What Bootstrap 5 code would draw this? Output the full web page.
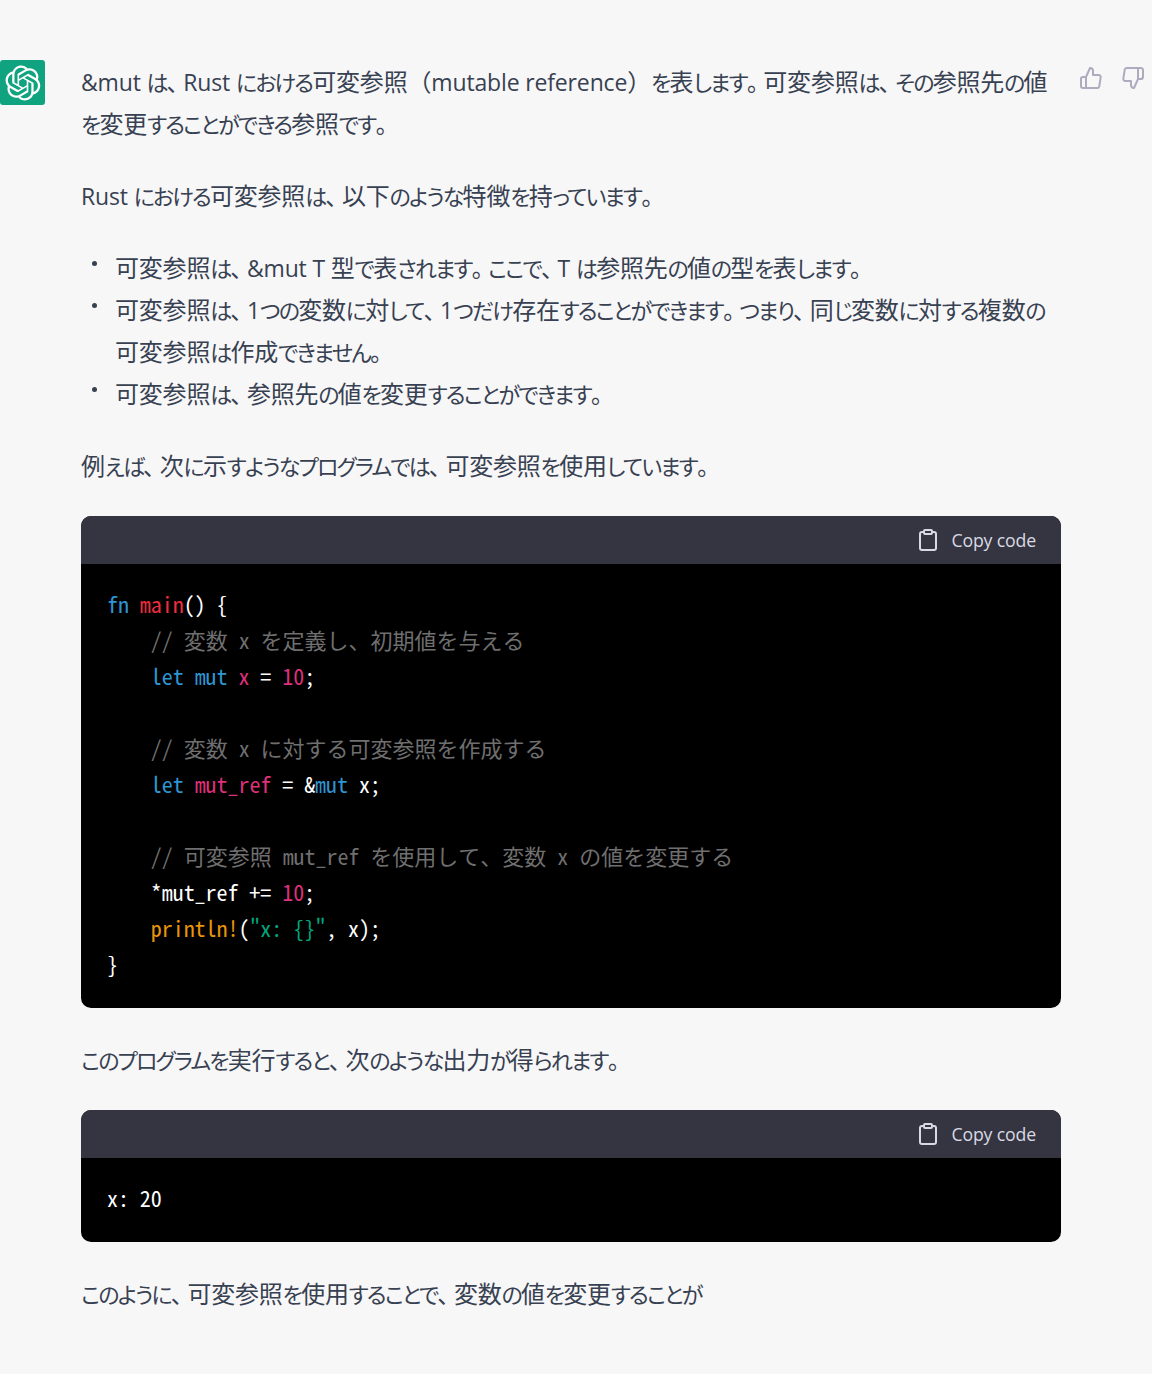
<!DOCTYPE html>
<html lang="ja">
<head>
<meta charset="utf-8">
<title>Rust 可変参照</title>
<link href="https://cdn.jsdelivr.net/npm/bootstrap@5.3.0/dist/css/bootstrap.min.css" rel="stylesheet">
<style>
html,body{background:#f7f7f8;}
body{height:1374px;overflow:hidden;color:#374151;font-family:"Open Sans","Noto Sans CJK JP",sans-serif;}
.chat-row{padding-top:60px;}
.avatar{width:45px;height:45px;background:#10a37f;border-radius:3px;flex:none;margin-right:36px;}
.msg{width:980px;flex:none;font-size:23px;line-height:42px;font-feature-settings:"palt";letter-spacing:-.15px;padding-top:1px;}
.msg p{margin:0 0 30px;}
.msg ul{list-style:none;margin:0 0 30px;padding:0 0 0 34px;}
.msg li{position:relative;}
.msg li::before{content:"";position:absolute;left:-23px;top:14px;width:5px;height:5px;border-radius:50%;background:#374151;}
.kj{font-size:24px;letter-spacing:-.2px;line-height:0;}
.kn{font-size:22px;letter-spacing:-1.8px;line-height:0;}
.pn{font-size:23px;letter-spacing:5px;line-height:0;}
.fw{font-size:24px;font-feature-settings:normal;line-height:0;}
.actions{margin-left:18px;gap:18px;padding-top:6px;color:#acacbe;}
.codebox{border-radius:10px;overflow:hidden;background:#000;margin:-1px 0 31px;}
.codehead{height:48px;background:#343541;color:#d9d9e3;font-size:17.7px;padding-right:25px;gap:11px;}
.codebody{margin:0;padding:21px 26px 27px;font-family:"Noto Sans Mono CJK JP","Liberation Mono",monospace;font-size:22px;font-weight:300;line-height:36px;letter-spacing:-.05px;color:#fff;}
.cjr{letter-spacing:0;}
.t-kw{color:#2e95d3}.t-fn{color:#f22c3d}.t-var{color:#df3079}.t-cm{color:#6f6f6f}.t-str{color:#00a67d}.t-mac{color:#e9950c}
</style>
</head>
<body>
<div class="d-flex align-items-start chat-row">
  <div class="avatar d-flex align-items-center justify-content-center">
    <svg width="36" height="36" viewBox="0 0 41 41" fill="#fff" aria-hidden="true"><path d="M37.5324 16.8707C37.9808 15.5241 38.1363 14.0974 37.9886 12.6859C37.8409 11.2744 37.3934 9.91076 36.676 8.68622C35.6126 6.83404 33.9882 5.3676 32.0373 4.4985C30.0864 3.62941 27.9098 3.40259 25.8215 3.85078C24.8796 2.7893 23.7219 1.94125 22.4257 1.36341C21.1295 0.785575 19.7249 0.491269 18.3058 0.500197C16.1708 0.495044 14.0893 1.16803 12.3614 2.42214C10.6335 3.67624 9.34853 5.44666 8.6917 7.47815C7.30085 7.76286 5.98686 8.3414 4.8377 9.17505C3.68854 10.0087 2.73073 11.0782 2.02839 12.312C0.956464 14.1591 0.498905 16.2988 0.721698 18.4228C0.944492 20.5467 1.83612 22.5449 3.268 24.1293C2.81966 25.4759 2.66413 26.9026 2.81182 28.3141C2.95951 29.7256 3.40701 31.0892 4.12437 32.3138C5.18791 34.1659 6.8123 35.6322 8.76321 36.5013C10.7141 37.3704 12.8907 37.5973 14.9789 37.1492C15.9208 38.2107 17.0786 39.0587 18.3747 39.6366C19.6709 40.2144 21.0755 40.5087 22.4946 40.4998C24.6307 40.5054 26.7133 39.8321 28.4418 38.5772C30.1704 37.3223 31.4556 35.5506 32.1119 33.5179C33.5027 33.2332 34.8167 32.6547 35.9659 31.821C37.115 30.9874 38.0728 29.9178 38.7752 28.684C39.8458 26.8371 40.3023 24.6979 40.0789 22.5748C39.8556 20.4517 38.9639 18.4544 37.5324 16.8707ZM22.4978 37.8849C20.7443 37.8874 19.0459 37.2733 17.6994 36.1501C17.7601 36.117 17.8666 36.0586 17.936 36.0161L25.9004 31.4156C26.1003 31.3019 26.2663 31.137 26.3813 30.9378C26.4964 30.7386 26.5563 30.5124 26.5549 30.2825V19.0542L29.9213 20.998C29.9389 21.0068 29.9541 21.0198 29.9656 21.0359C29.977 21.052 29.9842 21.0707 29.9867 21.0902V30.3889C29.9842 32.375 29.1946 34.2791 27.7909 35.6841C26.3872 37.0892 24.4838 37.8806 22.4978 37.8849ZM6.39227 31.0064C5.51397 29.4888 5.19742 27.7107 5.49804 25.9832C5.55718 26.0187 5.66048 26.0818 5.73461 26.1244L13.699 30.7248C13.8975 30.8408 14.1233 30.902 14.3532 30.902C14.583 30.902 14.8088 30.8408 15.0073 30.7248L24.731 25.1103V28.9979C24.7321 29.0177 24.7283 29.0376 24.7199 29.0556C24.7115 29.0736 24.6988 29.0893 24.6829 29.1012L16.6317 33.7497C14.9096 34.7416 12.8643 35.0097 10.9447 34.4954C9.02506 33.9811 7.38785 32.7263 6.39227 31.0064ZM4.29707 13.6194C5.17156 12.0998 6.55279 10.9364 8.19885 10.3327C8.19885 10.4013 8.19491 10.5228 8.19491 10.6071V19.808C8.19351 20.0378 8.25334 20.2638 8.36823 20.4629C8.48312 20.6619 8.64893 20.8267 8.84863 20.9404L18.5723 26.5542L15.206 28.4979C15.1894 28.5089 15.1703 28.5155 15.1505 28.5173C15.1307 28.5191 15.1107 28.516 15.0924 28.5082L7.04046 23.8557C5.32135 22.8601 4.06716 21.2235 3.55289 19.3046C3.03862 17.3858 3.30624 15.3413 4.29707 13.6194ZM31.955 20.0556L22.2312 14.4411L25.5976 12.4981C25.6142 12.4872 25.6333 12.4805 25.6531 12.4787C25.6729 12.4769 25.6928 12.4801 25.7111 12.4879L33.7631 17.1364C34.9967 17.849 36.0017 18.8982 36.6606 20.1613C37.3194 21.4244 37.6047 22.849 37.4832 24.2684C37.3617 25.6878 36.8382 27.0432 35.9743 28.1759C35.1103 29.3086 33.9415 30.1717 32.6047 30.6641C32.6047 30.5947 32.6047 30.4733 32.6047 30.3889V21.188C32.6066 20.9586 32.5474 20.7328 32.4332 20.5338C32.319 20.3348 32.154 20.1698 31.955 20.0556ZM35.3055 15.0128C35.2464 14.9765 35.1431 14.9142 35.069 14.8717L27.1045 10.2712C26.906 10.1554 26.6803 10.0943 26.4504 10.0943C26.2206 10.0943 25.9948 10.1554 25.7963 10.2712L16.0726 15.8858V11.9982C16.0715 11.9783 16.0753 11.9585 16.0837 11.9405C16.0921 11.9225 16.1048 11.9068 16.1207 11.8949L24.1719 7.25025C25.4053 6.53903 26.8158 6.19376 28.2383 6.25482C29.6608 6.31589 31.0364 6.78077 32.2044 7.59508C33.3723 8.40939 34.2842 9.53945 34.8334 10.8531C35.3826 12.1667 35.5464 13.6095 35.3055 15.0128ZM14.2424 21.9419L10.8752 19.9981C10.8576 19.9893 10.8423 19.9763 10.8309 19.9602C10.8195 19.9441 10.8122 19.9254 10.8098 19.9058V10.6071C10.8107 9.18295 11.2173 7.78848 11.9819 6.58696C12.7466 5.38544 13.8377 4.42659 15.1275 3.82264C16.4173 3.21869 17.8524 2.99464 19.2649 3.1767C20.6775 3.35876 22.0089 3.93941 23.1034 4.85067C23.0427 4.88379 22.937 4.94215 22.8668 4.98473L14.9024 9.58517C14.7025 9.69878 14.5366 9.86356 14.4215 10.0626C14.3065 10.2616 14.2466 10.4877 14.2479 10.7175L14.2424 21.9419ZM16.071 17.9991L20.4018 15.4978L24.7325 17.9975V22.9985L20.4018 25.4983L16.071 22.9985V17.9991Z"/></svg>
  </div>
  <div class="msg">
    <p>&amp;mut は、Rust における可変参照（mutable reference）を表します。可変参照は、その参照先の値を変更することができる参照です。</p>
    <p>Rust における可変参照は、以下のような特徴を持っています。</p>
    <ul>
      <li>可変参照は、&amp;mut T 型で表されます。ここで、T は参照先の値の型を表します。</li>
      <li>可変参照は、1つの変数に対して、1つだけ存在することができます。つまり、同じ変数に対する複数の可変参照は作成できません。</li>
      <li>可変参照は、参照先の値を変更することができます。</li>
    </ul>
    <p>例えば、次に示すようなプログラムでは、可変参照を使用しています。</p>
    <div class="codebox">
      <div class="codehead d-flex align-items-center justify-content-end">
        <svg width="24" height="24" viewBox="0 0 24 24" fill="none" stroke="currentColor" stroke-width="2" stroke-linecap="round" stroke-linejoin="round" aria-hidden="true"><path d="M16 4h2a2 2 0 0 1 2 2v14a2 2 0 0 1-2 2H6a2 2 0 0 1-2-2V6a2 2 0 0 1 2-2h2"/><rect x="8" y="2" width="8" height="4" rx="1"/></svg>
        <span>Copy code</span>
      </div>
<pre class="codebody"><span class="t-kw">fn</span> <span class="t-fn">main</span>() {
    <span class="t-cm">// 変数 x を定義し、初期値を与える</span>
    <span class="t-kw">let</span> <span class="t-kw">mut</span> <span class="t-var">x</span> = <span class="t-var">10</span>;

    <span class="t-cm">// 変数 x に対する可変参照を作成する</span>
    <span class="t-kw">let</span> <span class="t-var">mut_ref</span> = &amp;<span class="t-kw">mut</span> x;

    <span class="t-cm">// 可変参照 mut_ref を使用して、変数 x の値を変更する</span>
    *mut_ref += <span class="t-var">10</span>;
    <span class="t-mac">println!</span>(<span class="t-str">"x: {}"</span>, x);
}</pre>
    </div>
    <p>このプログラムを実行すると、次のような出力が得られます。</p>
    <div class="codebox">
      <div class="codehead d-flex align-items-center justify-content-end">
        <svg width="24" height="24" viewBox="0 0 24 24" fill="none" stroke="currentColor" stroke-width="2" stroke-linecap="round" stroke-linejoin="round" aria-hidden="true"><path d="M16 4h2a2 2 0 0 1 2 2v14a2 2 0 0 1-2 2H6a2 2 0 0 1-2-2V6a2 2 0 0 1 2-2h2"/><rect x="8" y="2" width="8" height="4" rx="1"/></svg>
        <span>Copy code</span>
      </div>
<pre class="codebody">x: 20</pre>
    </div>
    <p>このように、可変参照を使用することで、変数の値を変更することが</p>
  </div>
  <div class="actions d-flex">
    <svg width="24" height="24" viewBox="0 0 24 24" fill="none" stroke="currentColor" stroke-width="2" stroke-linecap="round" stroke-linejoin="round" aria-hidden="true"><path d="M14 9V5a3 3 0 0 0-3-3l-4 9v11h11.28a2 2 0 0 0 2-1.7l1.38-9a2 2 0 0 0-2-2.3zM7 22H4a2 2 0 0 1-2-2v-7a2 2 0 0 1 2-2h3"/></svg>
    <svg width="24" height="24" viewBox="0 0 24 24" fill="none" stroke="currentColor" stroke-width="2" stroke-linecap="round" stroke-linejoin="round" aria-hidden="true"><path d="M10 15v4a3 3 0 0 0 3 3l4-9V2H5.72a2 2 0 0 0-2 1.7l-1.38 9a2 2 0 0 0 2 2.3zm7-13h2.67A2.31 2.31 0 0 1 22 4v7a2.31 2.31 0 0 1-2.33 2H17"/></svg>
  </div>
</div>
<script>
document.querySelectorAll('.msg p, .msg li').forEach(function(el){
  el.innerHTML = el.innerHTML.replace(/[\u3040-\u30ff]+|[\u3001\u3002]+|[\u4e00-\u9fff]+|[（）]/g,function(m){
    var c = m.charCodeAt(0), k;
    if (m==='（'||m==='）') k='fw';
    else if (c===0x3001||c===0x3002) k='pn';
    else if (c>=0x4e00) k='kj';
    else k='kn';
    return '<span class="'+k+'">'+m+'</span>';
  });
});
document.querySelectorAll('.t-cm').forEach(function(el){
  el.innerHTML = el.innerHTML.replace(/[\u3001-\u9fff]+/g,'<span class="cjr">$&</span>');
});
</script>
<script src="https://cdn.jsdelivr.net/npm/bootstrap@5.3.0/dist/js/bootstrap.bundle.min.js"></script>
</body>
</html>
